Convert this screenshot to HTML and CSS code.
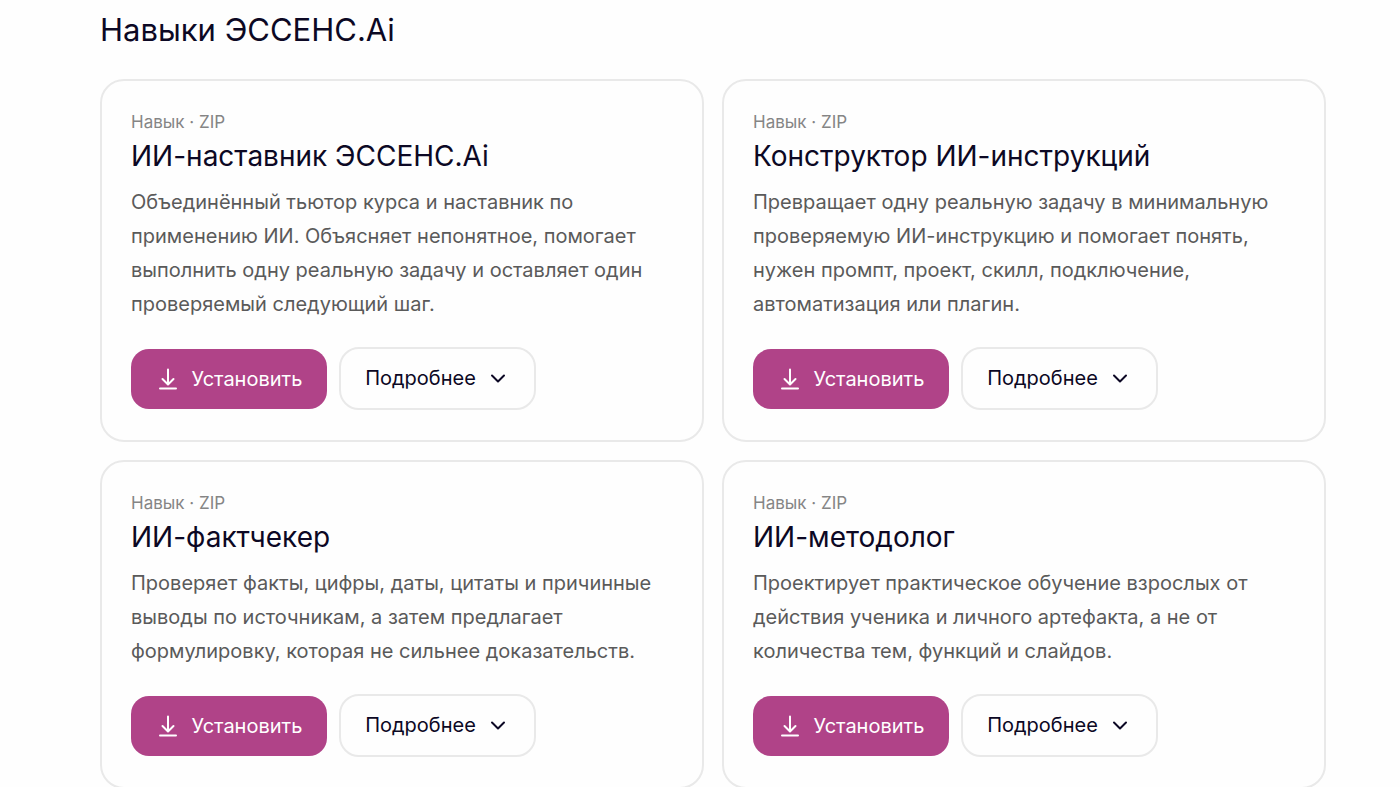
FILE: index.html
```
<!DOCTYPE html>
<html lang="ru">
  <head>
    <meta charset="UTF-8" />
    <meta name="viewport" content="width=device-width, initial-scale=1.0" />
    <title>Навыки ЭССЕНС.Ai</title>
    <link rel="stylesheet" href="styles.css">
  </head>
  <body>
    <svg class="sprite" aria-hidden="true">
      <symbol id="download" viewBox="0 0 24 24">
        <path d="M12 2.500v14.500M6.500 12l5.500 5.500 5.500-5.500M4 21.500h16" />
      </symbol>
      <symbol id="chevron" viewBox="0 0 24 24">
        <path d="M6 9.500l6 6 6-6" />
      </symbol>
    </svg>
    <main class="skills">
      <h1 class="skills-title">Навыки ЭССЕНС.Ai</h1>
      <div class="grid">
        <article class="card">
          <p class="meta">Навык · ZIP</p>
          <h2 class="name">ИИ-наставник ЭССЕНС.Ai</h2>
          <p class="text">Объединённый тьютор курса и наставник по<br>применению ИИ. Объясняет непонятное, помогает<br>выполнить одну реальную задачу и оставляет один<br>проверяемый следующий шаг.</p>
          <div class="actions">
            <button type="button" class="btn install"><svg class="icon"><use href="#download" /></svg>Установить</button>
            <button type="button" class="btn more">Подробнее<svg class="icon"><use href="#chevron" /></svg></button>
          </div>
        </article>
        <article class="card">
          <p class="meta">Навык · ZIP</p>
          <h2 class="name">Конструктор ИИ-инструкций</h2>
          <p class="text">Превращает одну реальную задачу в минимальную<br>проверяемую ИИ-инструкцию и помогает понять,<br>нужен промпт, проект, скилл, подключение,<br>автоматизация или плагин.</p>
          <div class="actions">
            <button type="button" class="btn install"><svg class="icon"><use href="#download" /></svg>Установить</button>
            <button type="button" class="btn more">Подробнее<svg class="icon"><use href="#chevron" /></svg></button>
          </div>
        </article>
        <article class="card">
          <p class="meta">Навык · ZIP</p>
          <h2 class="name">ИИ-фактчекер</h2>
          <p class="text">Проверяет факты, цифры, даты, цитаты и причинные<br>выводы по источникам, а затем предлагает<br>формулировку, которая не сильнее доказательств.</p>
          <div class="actions">
            <button type="button" class="btn install"><svg class="icon"><use href="#download" /></svg>Установить</button>
            <button type="button" class="btn more">Подробнее<svg class="icon"><use href="#chevron" /></svg></button>
          </div>
        </article>
        <article class="card">
          <p class="meta">Навык · ZIP</p>
          <h2 class="name">ИИ-методолог</h2>
          <p class="text">Проектирует практическое обучение взрослых от<br>действия ученика и личного артефакта, а не от<br>количества тем, функций и слайдов.</p>
          <div class="actions">
            <button type="button" class="btn install"><svg class="icon"><use href="#download" /></svg>Установить</button>
            <button type="button" class="btn more">Подробнее<svg class="icon"><use href="#chevron" /></svg></button>
          </div>
        </article>
      </div>
    </main>
  </body>
</html>
```
FILE: styles.css
```
* {
  margin: 0;
  padding: 0;
  box-sizing: border-box;
}
body {
  background-color: #fefefe;
  color: #0c0824;
  font-family: Inter, "Noto Sans", sans-serif;
}
.sprite {
  display: none;
}
.skills {
  padding: 10px 74px 32px 100px;
}
.skills-title {
  font-size: 31px;
  line-height: 40px;
  font-weight: 400;
  margin-bottom: 29px;
}
.grid {
  display: grid;
  grid-template-columns: 1fr 1fr;
  gap: 18px;
}
.card {
  padding: 30px 29px;
  border: 2px solid #e9e9e9;
  border-radius: 24px;
  background-color: #fefefe;
}
.meta {
  font-size: 17px;
  line-height: 22px;
  color: #858585;
}
.name {
  font-size: 28px;
  line-height: 36px;
  font-weight: 400;
  margin-top: 5px;
  margin-bottom: 11px;
}
.text {
  font-size: 20px;
  line-height: 34px;
  font-weight: 400;
  color: #5a5a5a;
}
.actions {
  display: flex;
  flex-wrap: wrap;
  align-items: center;
  gap: 12px;
  margin-top: 26px;
}
.btn {
  display: flex;
  align-items: center;
  justify-content: center;
  font-family: inherit;
  font-size: 20px;
  line-height: 24px;
  cursor: pointer;
}
.install {
  min-width: 196px;
  height: 60px;
  gap: 12px;
  border: none;
  border-radius: 18px;
  background-color: #b04388;
  color: #fff;
}
.more {
  min-width: 197px;
  height: 63px;
  gap: 10px;
  padding-bottom: 2px;
  border: 2px solid #e9e9e9;
  border-radius: 20px;
  background-color: #fefefe;
  color: #0c0824;
}
.icon {
  width: 24px;
  height: 24px;
  fill: none;
  stroke: currentColor;
  stroke-width: 2;
  stroke-linecap: round;
  stroke-linejoin: round;
}
```
